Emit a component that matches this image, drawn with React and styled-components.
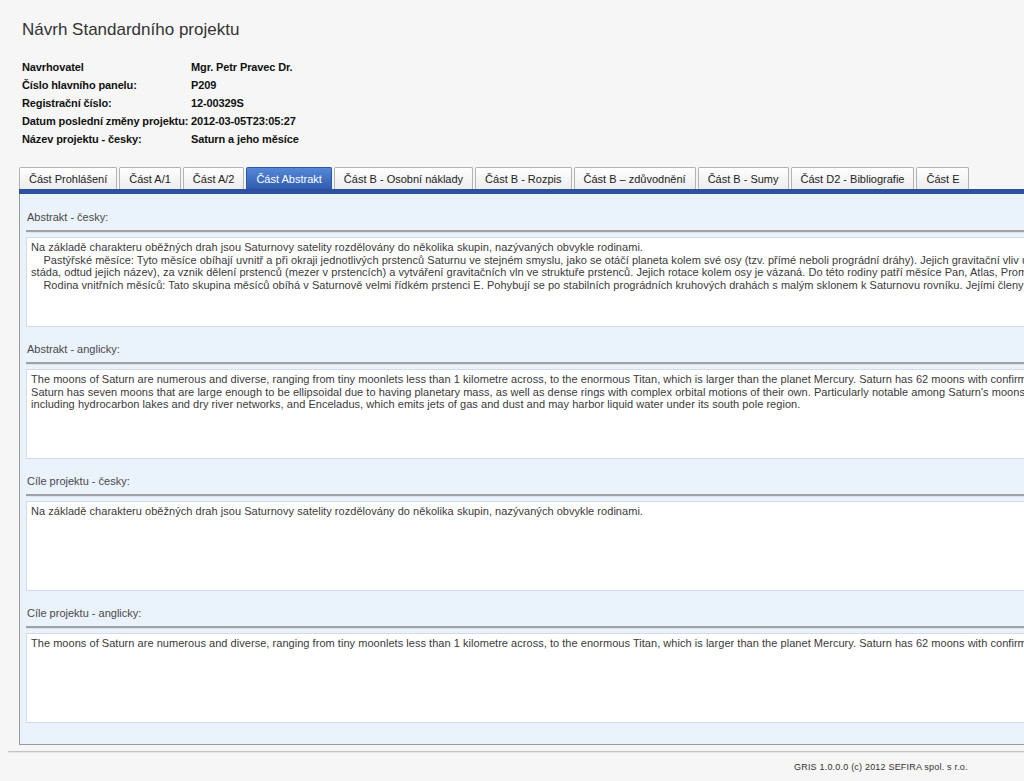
import React from "react";
import styled, { createGlobalStyle } from "styled-components";

const Global = createGlobalStyle`
  html, body {
    margin: 0;
    padding: 0;
    overflow: hidden;
    background: #f6f6f6;
  }
  body {
    font-family: "Liberation Sans", Arial, sans-serif;
    color: #333;
  }
`;

const Page = styled.div`
  width: 1500px;
  padding: 0 0 0 8px;
`;

const Header = styled.header`
  padding: 19px 0 0 14px;
`;

const Title = styled.h1`
  margin: 0;
  font-size: 17px;
  line-height: 22px;
  font-weight: normal;
  color: #333;
`;

const InfoTable = styled.div`
  display: grid;
  grid-template-columns: 169px auto;
  margin-top: 17px;
  font-size: 11px;
  line-height: 18px;
  font-weight: bold;
  letter-spacing: -0.12px;
  color: #111;
`;

const InfoCell = styled.div`
  white-space: nowrap;
`;

const Main = styled.main`
  margin: 19px 0 0 11px;
`;

const TabBar = styled.nav`
  display: flex;
  gap: 2px;
  align-items: flex-end;
  height: 22px;
`;

const Tab = styled.div`
  height: 22px;
  box-sizing: border-box;
  padding: 1px 9px 0;
  display: flex;
  align-items: center;
  font-size: 11px;
  white-space: nowrap;
  border: 1px solid ${(p) => (p.$active ? "#2c56a6" : "#b3b3b3")};
  border-bottom: none;
  border-radius: 2px 2px 0 0;
  color: ${(p) => (p.$active ? "#fff" : "#222")};
  background: ${(p) =>
    p.$active
      ? "linear-gradient(#5688d6, #2f5cb0)"
      : "linear-gradient(#ffffff, #ececec)"};
`;

const Bar = styled.div`
  height: 5px;
  background: #2e519f;
`;

const Panel = styled.section`
  background: #eaf2fc;
  border-left: 1px solid #9a9a9a;
  border-bottom: 1px solid #9a9a9a;
  padding: 16px 0 21px 6px;
  display: flex;
  flex-direction: column;
  gap: 15px;
`;

const Field = styled.div`
  display: flex;
  flex-direction: column;
`;

const FieldLabel = styled.div`
  font-size: 11px;
  line-height: 14px;
  color: #4a4a4a;
  padding-left: 1px;
`;

const Separator = styled.div`
  margin-top: 6px;
  height: 2px;
  background: #9fa3a8;
  border-bottom: 1px solid #dde3ea;
`;

const TextBox = styled.div`
  margin-top: 4px;
  height: 90px;
  box-sizing: border-box;
  background: #fff;
  border: 1px solid #d3dbe4;
  padding: 3px 4px;
  font-size: 11px;
  line-height: 12.7px;
  letter-spacing: 0.04px;
  color: #3a3a3a;
  white-space: pre;
  overflow: hidden;
`;

const FooterLine = styled.div`
  margin-top: 6px;
  height: 1px;
  background: #c4c4c4;
  border-bottom: 1px solid #e6e6e6;
`;

const FooterText = styled.div`
  margin: 9px 0 0 786px;
  font-size: 9px;
  letter-spacing: 0.2px;
  color: #333;
`;

const tabs = [
  "Část Prohlášení",
  "Část A/1",
  "Část A/2",
  "Část Abstrakt",
  "Část B - Osobní náklady",
  "Část B - Rozpis",
  "Část B – zdůvodnění",
  "Část B - Sumy",
  "Část D2 - Bibliografie",
  "Část E",
];

const info = [
  ["Navrhovatel", "Mgr. Petr Pravec Dr."],
  ["Číslo hlavního panelu:", "P209"],
  ["Registrační číslo:", "12-00329S"],
  ["Datum poslední změny projektu:", "2012-03-05T23:05:27"],
  ["Název projektu - česky:", "Saturn a jeho měsíce"],
];

const czFirst =
  "Na základě charakteru oběžných drah jsou Saturnovy satelity rozdělovány do několika skupin, nazývaných obvykle rodinami.";
const enFirst =
  "The moons of Saturn are numerous and diverse, ranging from tiny moonlets less than 1 kilometre across, to the enormous Titan, which is larger than the planet Mercury. Saturn has 62 moons with confirmed orbits, 53 of which have names.";

const fields = [
  {
    label: "Abstrakt - česky:",
    text: [
      czFirst,
      "    Pastýřské měsíce: Tyto měsíce obíhají uvnitř a při okraji jednotlivých prstenců Saturnu ve stejném smyslu, jako se otáčí planeta kolem své osy (tzv. přímé neboli prográdní dráhy). Jejich gravitační vliv udržuje prstence pohromadě (jako pastýři",
      "stáda, odtud jejich název), za vznik dělení prstenců (mezer v prstencích) a vytváření gravitačních vln ve struktuře prstenců. Jejich rotace kolem osy je vázaná. Do této rodiny patří měsíce Pan, Atlas, Prometheus, Pandora a Daphnis.",
      "    Rodina vnitřních měsíců: Tato skupina měsíců obíhá v Saturnově velmi řídkém prstenci E. Pohybují se po stabilních prográdních kruhových drahách s malým sklonem k Saturnovu rovníku. Jejími členy jsou Mimas, Enceladus a Tethys.",
    ].join("\n"),
  },
  {
    label: "Abstrakt - anglicky:",
    text: [
      enFirst,
      "Saturn has seven moons that are large enough to be ellipsoidal due to having planetary mass, as well as dense rings with complex orbital motions of their own. Particularly notable among Saturn's moons are Titan, the second-largest moon in the Solar System,",
      "including hydrocarbon lakes and dry river networks, and Enceladus, which emits jets of gas and dust and may harbor liquid water under its south pole region.",
    ].join("\n"),
  },
  { label: "Cíle projektu - česky:", text: czFirst },
  { label: "Cíle projektu - anglicky:", text: enFirst },
];

export default function App() {
  return (
    <>
      <Global />
      <Page>
        <Header>
          <Title>Návrh Standardního projektu</Title>
          <InfoTable>
            {info.map(([k, v]) => (
              <React.Fragment key={k}>
                <InfoCell>{k}</InfoCell>
                <InfoCell>{v}</InfoCell>
              </React.Fragment>
            ))}
          </InfoTable>
        </Header>
        <Main>
          <TabBar>
            {tabs.map((t) => (
              <Tab key={t} $active={t === "Část Abstrakt"}>
                {t}
              </Tab>
            ))}
          </TabBar>
          <Bar />
          <Panel>
            {fields.map((f) => (
              <Field key={f.label}>
                <FieldLabel>{f.label}</FieldLabel>
                <Separator />
                <TextBox>{f.text}</TextBox>
              </Field>
            ))}
          </Panel>
        </Main>
        <FooterLine />
        <FooterText>GRIS 1.0.0.0 (c) 2012 SEFIRA spol. s r.o.</FooterText>
      </Page>
    </>
  );
}
